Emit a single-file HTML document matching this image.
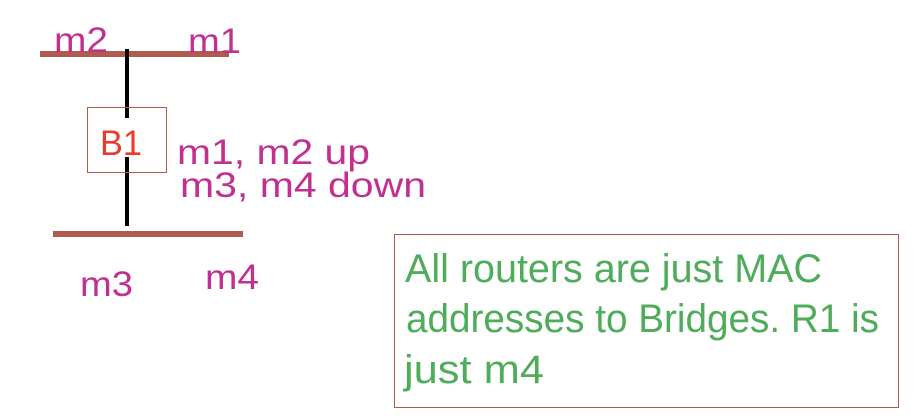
<!DOCTYPE html>
<html><head><style>html,body{margin:0;padding:0;background:#fff;width:924px;height:418px;overflow:hidden}</style></head>
<body>
<svg width="924" height="418" xmlns="http://www.w3.org/2000/svg" font-family="Liberation Sans, sans-serif">
<rect x="40" y="51" width="189" height="6" fill="#b05a50"/>
<rect x="53" y="231" width="190" height="6" fill="#b05a50"/>
<rect x="125" y="49" width="4" height="69" fill="#000"/>
<rect x="125" y="157" width="4" height="69" fill="#000"/>
<rect x="87.5" y="107.5" width="79" height="65" fill="none" stroke="#b8574c" stroke-width="1"/>
<g fill="#c1308f" font-size="35">
<text x="54" y="52" textLength="54" lengthAdjust="spacingAndGlyphs">m2</text>
<text x="188" y="53" textLength="53" lengthAdjust="spacingAndGlyphs">m1</text>
<text x="177" y="164" textLength="193" lengthAdjust="spacingAndGlyphs">m1, m2 up</text>
<text x="180" y="197" textLength="246" lengthAdjust="spacingAndGlyphs">m3, m4 down</text>
<text x="80" y="296" textLength="53" lengthAdjust="spacingAndGlyphs">m3</text>
<text x="205" y="289" textLength="54" lengthAdjust="spacingAndGlyphs">m4</text>
</g>
<text x="100" y="155" font-size="35" fill="#ea3a2a" textLength="42" lengthAdjust="spacingAndGlyphs">B1</text>
<rect x="394.5" y="234.5" width="504" height="173" fill="none" stroke="#b8574c" stroke-width="1"/>
<g fill="#4fac5b" font-size="40">
<text x="405" y="282" textLength="417" lengthAdjust="spacingAndGlyphs">All routers are just MAC</text>
<text x="406" y="332" textLength="473" lengthAdjust="spacingAndGlyphs">addresses to Bridges. R1 is</text>
<text x="404" y="383" textLength="140" lengthAdjust="spacingAndGlyphs">just m4</text>
</g>
</svg>
</body></html>
